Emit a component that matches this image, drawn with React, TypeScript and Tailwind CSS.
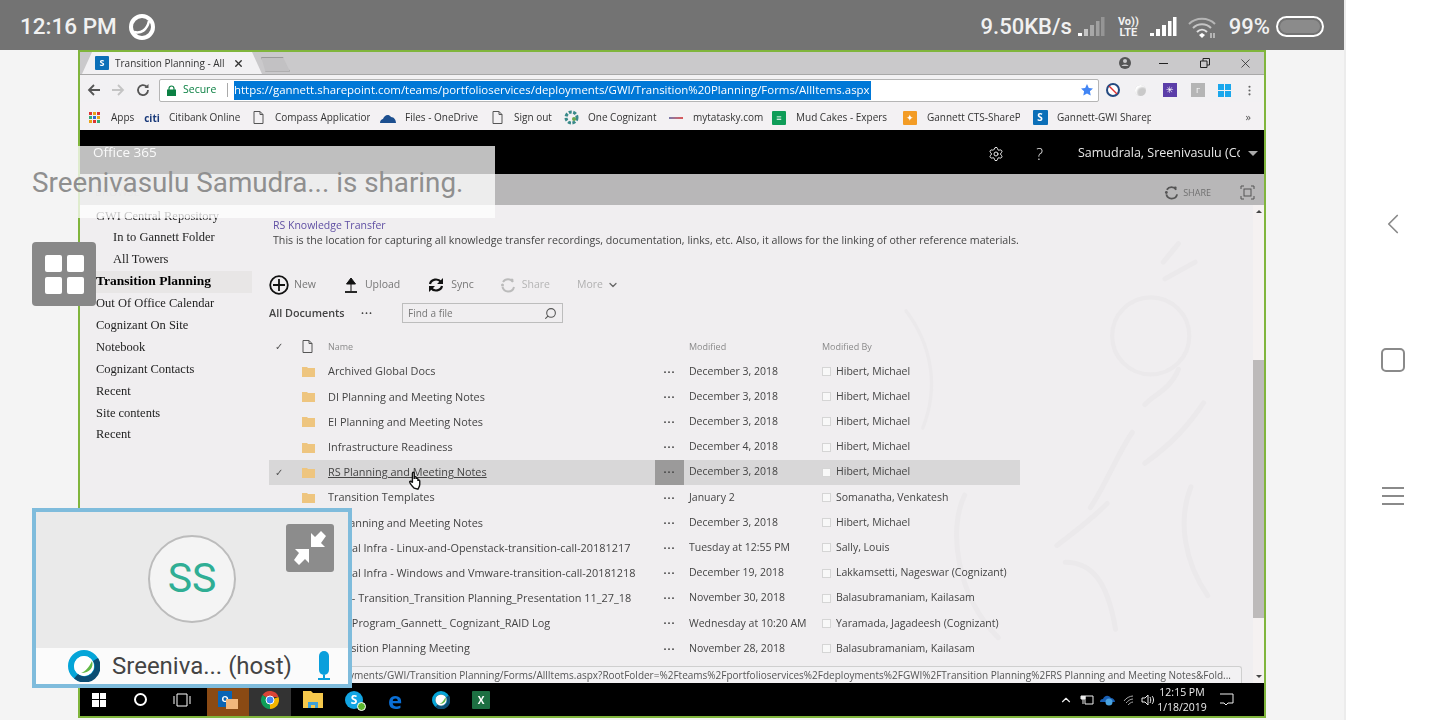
import { ChevronDown, ChevronLeft, ChevronUp, MoreVertical, Search, Settings, X } from "lucide-react";

const rows = [
  { name: "Archived Global Docs", date: "December 3, 2018", by: "Hibert, Michael" },
  { name: "DI Planning and Meeting Notes", date: "December 3, 2018", by: "Hibert, Michael" },
  { name: "EI Planning and Meeting Notes", date: "December 3, 2018", by: "Hibert, Michael" },
  { name: "Infrastructure Readiness", date: "December 4, 2018", by: "Hibert, Michael" },
  { name: "RS Planning and Meeting Notes", date: "December 3, 2018", by: "Hibert, Michael", active: true },
  { name: "Transition Templates", date: "January 2", by: "Somanatha, Venkatesh" },
  { name: "TI Planning and Meeting Notes", date: "December 3, 2018", by: "Hibert, Michael" },
  { name: "Global Infra - Linux-and-Openstack-transition-call-20181217", date: "Tuesday at 12:55 PM", by: "Sally, Louis" },
  { name: "Global Infra - Windows and Vmware-transition-call-20181218", date: "December 19, 2018", by: "Lakkamsetti, Nageswar (Cognizant)" },
  { name: "GWI - Transition_Transition Planning_Presentation 11_27_18", date: "November 30, 2018", by: "Balasubramaniam, Kailasam" },
  { name: "GWI Program_Gannett_ Cognizant_RAID Log", date: "Wednesday at 10:20 AM", by: "Yaramada, Jagadeesh (Cognizant)" },
  { name: "Transition Planning Meeting", date: "November 28, 2018", by: "Balasubramaniam, Kailasam" },
];

const navItems = [
  { label: "GWI Central Repository", indent: false },
  { label: "In to Gannett Folder", indent: true },
  { label: "All Towers", indent: true },
  { label: "Transition Planning", indent: false, active: true },
  { label: "Out Of Office Calendar", indent: false },
  { label: "Cognizant On Site", indent: false },
  { label: "Notebook", indent: false },
  { label: "Cognizant Contacts", indent: false },
  { label: "Recent", indent: false },
  { label: "Site contents", indent: false },
  { label: "Recent", indent: false },
];

function SpLogo({ small }: { small?: boolean }) {
  return (
    <span className={`flex items-center justify-center rounded-[1px] bg-[#0b6fb8] font-bold text-white ${small ? "h-[14px] w-[14px] text-[9px]" : "h-[15px] w-[15px] text-[10px]"}`}>
      S
    </span>
  );
}

function Webex({ size }: { size: number }) {
  return (
    <svg width={size} height={size} viewBox="0 0 32 32" className="shrink-0">
      <circle cx="16" cy="16" r="13" fill="none" stroke="#05a5d8" strokeWidth="6" />
      <path d="M27.5 9.5A13 13 0 0 1 8 26.3" fill="none" stroke="#0b4d73" strokeWidth="6" />
      <circle cx="16" cy="16" r="10" fill="#fff" />
      <path d="M24 11c2 6-2 12-11 12 5-2 8-6 11-12z" fill="#63b946" />
    </svg>
  );
}

function SignalBars({ dim }: { dim?: boolean }) {
  return (
    <svg width="28" height="22" viewBox="0 0 28 22">
      <rect x="1" y="17" width="4" height="3" fill="#fff" />
      <rect x="7" y="13" width="4" height="7" fill={dim ? "#c5c5c5" : "#fff"} />
      <rect x="13" y="9" width="4" height="11" fill={dim ? "#a8a8a8" : "#fff"} />
      <rect x="19" y="5" width="3.5" height="15" fill={dim ? "#a0a0a0" : "#fff"} />
      <rect x="24" y="1" width="3.5" height="19" fill={dim ? "#959595" : "#fff"} />
    </svg>
  );
}

function StatusBar() {
  return (
    <div className="flex h-[50px] w-[1344px] items-center bg-[#737373] pt-[3px] font-['Roboto',sans-serif] font-medium text-[#f1f1f1]">
      <span className="ml-[20px] text-[22.5px]">12:16 PM</span>
      <svg width="28" height="28" viewBox="0 0 28 28" className="ml-[11px]">
        <circle cx="14" cy="14" r="11" fill="none" stroke="#fff" strokeWidth="4" />
        <path d="M6 19c7 2 13-2 15-11" fill="none" stroke="#fff" strokeWidth="2.5" />
      </svg>
      <span className="ml-auto text-[22px]">9.50KB/s</span>
      <span className="ml-[5px]"><SignalBars dim /></span>
      <div className="ml-[13px] flex flex-col items-center text-[11px] font-bold leading-[11px]">
        <span>Vo))</span>
        <span>LTE</span>
      </div>
      <span className="ml-[10px]"><SignalBars /></span>
      <svg width="30" height="24" viewBox="0 0 30 24" className="ml-[10px]">
        <path d="M2 9c7-7 19-7 26 0" fill="none" stroke="#b5b5b5" strokeWidth="2" />
        <path d="M6 13c5-5 13-5 18 0" fill="none" stroke="#c5c5c5" strokeWidth="2" />
        <path d="M10 17c3-3 7-3 10 0" fill="none" stroke="#e0e0e0" strokeWidth="2" />
        <path d="M12 20l3-2 3 2-3 3z" fill="#fff" />
        <path d="M24 18v5M27 18v5" stroke="#d0d0d0" strokeWidth="1.4" />
      </svg>
      <span className="ml-[12px] text-[22px]">99%</span>
      <div className="ml-[6px] mr-[20px] flex h-[21px] w-[48px] items-center rounded-full border-[2px] border-white p-[2px]">
        <div className="h-full w-full rounded-full bg-[#8b8b8b]" />
      </div>
    </div>
  );
}

function TabStrip() {
  return (
    <div className="relative flex h-[23px] items-center border-b border-[#a8a8a8] bg-[#cac9cb]">
      <div className="ml-[2px] flex h-[22px] w-[180px] items-center bg-[#f2f1f3] pl-[13px] [clip-path:polygon(0_100%,10px_0,170px_0,180px_100%)]">
        <SpLogo small />
        <span className="ml-[6px] w-[109px] overflow-hidden whitespace-nowrap text-[10px] text-[#333]">Transition Planning - All I</span>
        <X size={11} strokeWidth={3} className="ml-[9px] text-[#333]" />
      </div>
      <div className="ml-[-1px] mt-[2px] h-[15px] w-[29px] border border-[#9a9a9a] bg-[#c2c1c3] [clip-path:polygon(0_0,75%_0,100%_100%,15%_100%)]" />
      <div className="ml-auto flex items-center text-[#333]">
        <svg width="14" height="14" viewBox="0 0 14 14">
          <circle cx="7" cy="7" r="6" fill="#555" />
          <circle cx="7" cy="5" r="2" fill="#cac9cb" />
          <path d="M3.5 10c1-2 6-2 7 0" fill="#cac9cb" />
        </svg>
        <div className="ml-[27px] h-px w-[9px] bg-[#222]" />
        <svg width="10" height="10" viewBox="0 0 10 10" className="ml-[32px]">
          <path d="M.5 3h6.500v6.500h-6.500zM3 3V.5h6.500v6.500H7" fill="none" stroke="#222" />
        </svg>
        <X size={15} strokeWidth={1.2} className="ml-[28px] mr-[11px] text-[#222]" />
      </div>
    </div>
  );
}

function ToolBar() {
  return (
    <div className="flex h-[27px] items-center bg-[#f2f1f3] pt-[3px]">
      <svg width="14" height="14" viewBox="0 0 14 14" className="ml-[7px]">
        <path d="M13 7H2M7 2 2 7l5 5" fill="none" stroke="#555" strokeWidth="1.800" />
      </svg>
      <svg width="14" height="14" viewBox="0 0 14 14" className="ml-[10px]">
        <path d="M1 7h11M7 2l5 5-5 5" fill="none" stroke="#c4c4c4" strokeWidth="1.800" />
      </svg>
      <svg width="14" height="14" viewBox="0 0 14 14" className="ml-[11px]">
        <path d="M12 7a5 5 0 1 1-1.500-3.500" fill="none" stroke="#555" strokeWidth="1.800" />
        <path d="M12.500 1v4h-4z" fill="#555" />
      </svg>
      <div className="ml-[9px] flex h-[23px] w-[940px] items-center rounded-[2px] border border-[#b5b5b5] bg-white">
        <svg width="9" height="11" viewBox="0 0 9 11" className="ml-[7px]">
          <path d="M2 5V3.500a2.500 2.500 0 0 1 5 0V5" fill="none" stroke="#0b8043" strokeWidth="1.200" />
          <rect y="4.500" width="9" height="6.500" fill="#0b8043" />
        </svg>
        <span className="ml-[7px] w-[36px] text-[10.5px] text-[#0b8043]">Secure</span>
        <div className="ml-[8px] h-[14px] w-px bg-[#aaa]" />
        <span className="ml-[6px] flex h-[19px] items-center bg-[#0078d7] pr-px text-[11.45px] whitespace-nowrap text-white">
          https://gannett.sharepoint.com/teams/portfolioservices/deployments/GWI/Transition%20Planning/Forms/AllItems.aspx
        </span>
        <svg width="14" height="14" viewBox="0 0 14 14" className="ml-auto mr-[4px]">
          <path d="m7 1 1.800 3.900 4.200.5-3.100 2.900.8 4.200L7 10.400l-3.700 2.100.8-4.200L1 5.400l4.200-.5z" fill="#4285f4" />
        </svg>
      </div>
      <svg width="14" height="14" viewBox="0 0 14 14" className="ml-[7px]">
        <circle cx="7" cy="7" r="6" fill="#fff" stroke="#234a80" strokeWidth="2" />
        <path d="M3 3l8 8" stroke="#d33" strokeWidth="1.500" />
      </svg>
      <div className="ml-[15px] h-[11px] w-[11px] rounded-full bg-[#c9c9c9] shadow-[inset_2px_2px_2px_#fff]" />
      <div className="ml-[17px] flex h-[14px] w-[14px] items-center justify-center bg-[#5b3ea8] text-[9px] text-white">✳</div>
      <div className="ml-[14px] flex h-[14px] w-[14px] items-center justify-center bg-[#b5b5b5] text-[8px] text-white">Γ</div>
      <div className="ml-[13px] grid h-[13px] w-[13px] grid-cols-2 gap-px">
        <div className="bg-[#1aa7ec]" />
        <div className="bg-[#1aa7ec]" />
        <div className="bg-[#1aa7ec]" />
        <div className="bg-[#1aa7ec]" />
      </div>
      <MoreVertical size={13} className="ml-[12px] text-[#666]" />
    </div>
  );
}

function Bookmark({ width, icon, label, labelWidth }: { width: string; icon: React.ReactNode; label: string; labelWidth: string }) {
  return (
    <div className={`flex items-center ${width}`}>
      <span className="flex w-[16px] shrink-0 justify-center">{icon}</span>
      <span className={`ml-[9px] overflow-hidden whitespace-nowrap text-[10px] text-[#333] ${labelWidth}`}>{label}</span>
    </div>
  );
}

function DocIcon() {
  return (
    <svg width="11" height="13" viewBox="0 0 11 13">
      <path d="M1 .5h6l3 3v9H1zM7 .5v3h3" fill="none" stroke="#555" />
    </svg>
  );
}

function BookmarksBar() {
  return (
    <div className="flex h-[28px] items-center bg-[#f3f1f3] pl-[6px] pt-[3px]">
      <Bookmark
        width="w-[58px]"
        label="Apps"
        labelWidth="w-[28px]"
        icon={
          <span className="grid h-[11px] w-[11px] grid-cols-3 gap-px">
            {["bg-[#d33]", "bg-[#e8a317]", "bg-[#d33]", "bg-[#3a7]", "bg-[#36c]", "bg-[#e8a317]", "bg-[#e8a317]", "bg-[#d33]", "bg-[#3a7]"].map((c, i) => (
              <span key={i} className={c} />
            ))}
          </span>
        }
      />
      <Bookmark width="w-[106px]" label="Citibank Online" labelWidth="w-[72px]" icon={<span className="text-[10px] font-bold leading-none text-[#1a3a7a]">citi</span>} />
      <Bookmark width="w-[130px]" label="Compass Application" labelWidth="w-[95px]" icon={<DocIcon />} />
      <Bookmark
        width="w-[109px]"
        label="Files - OneDrive"
        labelWidth="w-[74px]"
        icon={
          <svg width="16" height="10" viewBox="0 0 16 10">
            <path d="M0 10c0-3 2-4 3-4 1-3 5-6 8-2 3 0 5 3 5 6z" fill="#1c4f8f" />
          </svg>
        }
      />
      <Bookmark width="w-[74px]" label="Sign out" labelWidth="w-[40px]" icon={<DocIcon />} />
      <Bookmark
        width="w-[105px]"
        label="One Cognizant"
        labelWidth="w-[70px]"
        icon={
          <svg width="15" height="15" viewBox="0 0 15 15">
            <circle cx="7.500" cy="7.500" r="5.500" fill="none" stroke="#3a8a8a" strokeWidth="3" strokeDasharray="3 1.500" />
            <circle cx="10" cy="9" r="2" fill="#6aa84f" />
          </svg>
        }
      />
      <Bookmark width="w-[103px]" label="mytatasky.com" labelWidth="w-[72px]" icon={<span className="h-[2px] w-[14px] bg-gradient-to-r from-[#77a] to-[#d55]" />} />
      <Bookmark
        width="w-[131px]"
        label="Mud Cakes - Expers"
        labelWidth="w-[93px]"
        icon={
          <span className="flex h-[14px] w-[14px] items-center justify-center rounded-[1px] bg-[#0f9d58] text-[9px] leading-none text-white">≡</span>
        }
      />
      <Bookmark
        width="w-[130px]"
        label="Gannett CTS-ShareP"
        labelWidth="w-[93px]"
        icon={<span className="flex h-[14px] w-[14px] items-center justify-center rounded-[1px] bg-[#f39c25] text-[9px] leading-none text-white">✦</span>}
      />
      <Bookmark width="w-[129px]" label="Gannett-GWI Sharep" labelWidth="w-[94px]" icon={<SpLogo />} />
      <span className="ml-auto mr-[13px] text-[11px] text-[#555]">»</span>
    </div>
  );
}

function TopBar() {
  return (
    <div className="flex h-[44px] items-center bg-black pt-[3px] text-[#e8e8e8]">
      <span className="ml-[13px] -translate-y-[1px] text-[13.500px]">Office 365</span>
      <Settings size={16} strokeWidth={1.500} className="ml-auto" />
      <span className="ml-[32px] text-[16px] font-light">?</span>
      <span className="ml-[35px] w-[162px] overflow-hidden whitespace-nowrap text-[12.500px]">Samudrala, Sreenivasulu (Cognizant)</span>
      <div className="ml-[8px] mr-[6px] h-0 w-0 border-x-[5px] border-t-[5px] border-x-transparent border-t-[#aaa]" />
    </div>
  );
}

function ShareStrip() {
  return (
    <div className="flex h-[31px] items-center bg-[#b8b7b8] pt-[6px]">
      <span className="ml-[15px] text-[11px] text-[#aaa]">BROWSE</span>
      <svg width="15" height="15" viewBox="0 0 16 16" className="ml-auto">
        <path d="M3 5a6 6 0 0 1 10 0M14 10a6 6 0 0 1-6 4.500A6 6 0 0 1 2.500 10" fill="none" stroke="#555" strokeWidth="2" />
        <circle cx="2.500" cy="8" r="1.500" fill="#555" />
        <circle cx="12" cy="3" r="1.500" fill="#555" />
      </svg>
      <span className="ml-[4px] text-[9px] text-[#707070]">SHARE</span>
      <svg width="15" height="15" viewBox="0 0 15 15" className="ml-[29px] mr-[9px]">
        <path d="M1 4V1h3M11 1h3v3M14 11v3h-3M4 14H1v-3" fill="none" stroke="#555" />
        <rect x="4" y="4" width="7" height="7" fill="none" stroke="#555" />
      </svg>
    </div>
  );
}

function Sidebar() {
  return (
    <div className="w-[189px] shrink-0 font-['Liberation_Serif',serif] text-[12.500px] text-[#222]">
      {navItems.map((item, i) => (
        <div
          key={i}
          className={`flex h-[21.900px] items-center ${item.active ? "mr-[17px] bg-[#e8e6e6] text-[13.500px] font-bold text-black" : ""} ${item.indent ? "pl-[33px]" : "pl-[16px]"}`}
        >
          {item.label}
        </div>
      ))}
    </div>
  );
}

function CommandBar() {
  return (
    <div className="mt-[25px] flex h-[24px] items-center text-[10.500px] text-[#777]">
      <svg width="20" height="20" viewBox="0 0 20 20">
        <circle cx="10" cy="10" r="8.800" fill="none" stroke="#111" strokeWidth="1.800" />
        <path d="M10 4v12M4 10h12" stroke="#111" strokeWidth="1.800" />
      </svg>
      <span className="ml-[5px]">New</span>
      <svg width="14" height="16" viewBox="0 0 14 16" className="ml-[28px]">
        <path d="M7 14V3M2.500 7 7 1l4.500 6z" fill="#111" stroke="#111" />
        <path d="M1 15h12" stroke="#111" strokeWidth="1.800" />
      </svg>
      <span className="ml-[7px]">Upload</span>
      <svg width="16" height="16" viewBox="0 0 16 16" className="ml-[28px]">
        <path d="M2 7c1-5 8-6 11-2M14 9c-1 5-8 6-11 2" fill="none" stroke="#111" strokeWidth="2.200" />
        <path d="M15 1v6H9zM1 15V9h6z" fill="#111" />
      </svg>
      <span className="ml-[7px]">Sync</span>
      <svg width="16" height="16" viewBox="0 0 16 16" className="ml-[26px]">
        <path d="M3 5a6 6 0 0 1 10 0M14 10a6 6 0 0 1-6 4.500A6 6 0 0 1 2.500 10" fill="none" stroke="#bbb" strokeWidth="2" />
        <circle cx="2.500" cy="8" r="1.500" fill="#bbb" />
        <circle cx="12" cy="3" r="1.500" fill="#bbb" />
      </svg>
      <span className="ml-[6px] text-[#b5b5b5]">Share</span>
      <span className="ml-[27px] text-[#b0b0b0]">More</span>
      <ChevronDown size={12} strokeWidth={2.500} className="ml-[4px] text-[#666]" />
    </div>
  );
}

function ViewBar() {
  return (
    <div className="mt-[6px] flex h-[20px] items-center">
      <span className="w-[75px] whitespace-nowrap text-[10.800px] font-semibold text-[#444]">All Documents</span>
      <span className="ml-[17px] w-[14px] text-[8px] leading-none tracking-[1px] text-[#444]">•••</span>
      <div className="ml-[27px] flex h-[20px] w-[161px] items-center border border-[#bdbdbd] pl-[5px] pr-[5px] text-[10px] text-[#777]">
        Find a file
        <Search size={13} className="ml-auto -scale-x-100 text-[#555]" />
      </div>
    </div>
  );
}

function FileGrid() {
  return (
    <div className="mt-[11px] w-[751px] text-[10.500px] text-[#444]">
      <div className="grid h-[25px] grid-cols-[33px_26px_327px_29px_138px_1fr] items-center text-[9px] text-[#8a8a8a]">
        <span className="pl-[6px] text-[10px] text-[#555]">✓</span>
        <svg width="11" height="13" viewBox="0 0 11 13">
          <path d="M1 .5h6l3 3v9H1zM7 .5v3h3" fill="none" stroke="#555" />
        </svg>
        <span>Name</span>
        <span />
        <span className="pl-[5px]">Modified</span>
        <span>Modified By</span>
      </div>
      {rows.map((row) => (
        <div
          key={row.name}
          className={`grid h-[25.200px] grid-cols-[33px_26px_327px_29px_138px_1fr] items-center whitespace-nowrap ${row.active ? "bg-[#d8d7d8]" : ""}`}
        >
          <span className="pl-[6px] text-[10px] text-[#555]">{row.active ? "✓" : ""}</span>
          <svg width="13" height="11" viewBox="0 0 13 11">
            <path d="M0 1h5l1 1h7v9H0z" fill="#eec57f" />
          </svg>
          <span className={`text-[10.900px] ${row.active ? "underline" : ""}`}>{row.name}</span>
          <span className={`flex h-full items-center justify-center text-[8px] tracking-[1px] text-[#444] ${row.active ? "bg-[#9b9a9a]" : ""}`}>•••</span>
          <span className="pl-[5px]">{row.date}</span>
          <span className="flex items-center gap-[5px]">
            <span className="h-[9px] w-[9px] border border-[#d5d5d5] bg-[#f8f8f8]" />
            {row.by}
          </span>
        </div>
      ))}
    </div>
  );
}

function Watermark() {
  return (
    <svg className="absolute inset-0 h-full w-full" viewBox="0 0 1174 478" fill="none" stroke="#ebe9eb" strokeWidth="6" strokeLinecap="round">
      <circle cx="1052" cy="110" r="46" strokeWidth="5" />
      <path d="M1085 0l-18 22M1105 22l-36 20M1085 150c-10 25-30 30-40 42M1115 190c-20 30-40 50-70 72M1030 225c-20 30-30 60-50 90M1000 310c-20 20-40 35-60 50" />
      <path d="M830 300c-20 40-10 120 40 170M1100 290c-16 40-8 90 20 130M950 380c30 0 50 20 60 80" />
      <path d="M760 80c30 40 40 90 20 140" strokeWidth="4" />
    </svg>
  );
}

function MainContent() {
  return (
    <div className="relative flex-1 overflow-hidden">
      <Watermark />
      <div className="relative pt-[13px] font-['Open_Sans',sans-serif]">
        <div className="pl-[4px] text-[10.500px] leading-[15px] text-[#5f4fa3]">RS Knowledge Transfer</div>
        <div className="pl-[4px] text-[10.650px] leading-[15px] text-[#444]">
          This is the location for capturing all knowledge transfer recordings, documentation, links, etc. Also, it allows for the linking of other reference materials.
        </div>
        <CommandBar />
        <ViewBar />
        <FileGrid />
      </div>
      <div className="absolute bottom-0 right-[11px] flex h-[17px] w-[1163px] items-center justify-end overflow-hidden rounded-tr-[3px] border border-b-0 border-[#cfcfcf] bg-[#f2f1f3] pr-[10px] font-['Open_Sans',sans-serif] text-[10px] whitespace-nowrap text-[#555]">
        deployments/GWI/Transition Planning/Forms/AllItems.aspx?RootFolder=%2Fteams%2Fportfolioservices%2Fdeployments%2FGWI%2FTransition Planning%2FRS Planning and Meeting Notes&amp;Fold...
      </div>
      <svg width="22" height="22" viewBox="0 0 24 24" className="absolute left-[137px] top-[264px]">
        <path d="M9 21c-2-2-5-5-5-7 0-1 2-1 3 1V5c0-2 2-2 2 0v6-2c0-1 2-1 2 0v2c0-1 2-1 2 0v2c0-1 2-1 2 0v4c0 2-1 3-2 5z" fill="#fff" stroke="#111" strokeWidth="1.500" />
      </svg>
    </div>
  );
}

function ScrollBar() {
  return (
    <div className="flex w-[11px] shrink-0 flex-col items-center bg-[#f5f1f1]">
      <div className="mt-[5px] h-0 w-0 border-x-[3px] border-b-[3px] border-x-transparent border-b-[#444]" />
      <div className="mt-[147px] h-[258px] w-full bg-[#bdbaba]" />
      <div className="mt-auto mb-[5px] h-0 w-0 border-x-[3px] border-t-[3px] border-x-transparent border-t-[#444]" />
    </div>
  );
}

function TaskBar() {
  return (
    <div className="flex h-[33px] items-center bg-black pr-[2px] text-[#eee]">
      <div className="ml-[12px] grid h-[14px] w-[14px] grid-cols-2 gap-[1px]">
        <div className="bg-white" />
        <div className="bg-white" />
        <div className="bg-white" />
        <div className="bg-white" />
      </div>
      <div className="ml-[28px] h-[13px] w-[13px] rounded-full border-[2px] border-white" />
      <svg width="18" height="14" viewBox="0 0 18 14" className="ml-[26px]">
        <path d="M4 1h10v12H4zM1 3v8M17 3v8" fill="none" stroke="#fff" />
      </svg>
      <div className="ml-[16px] flex h-full w-[42px] items-center justify-center bg-[#8a4a14]">
        <div className="relative h-[18px] w-[20px]">
          <div className="flex h-[16px] w-[14px] items-center justify-center bg-[#0a64b4] text-[9px] font-bold leading-none text-white">O</div>
          <div className="absolute bottom-0 right-0 h-[10px] w-[12px] bg-[#f2b77c]" />
        </div>
      </div>
      <div className="flex h-full w-[42px] items-center justify-center bg-[#333]">
        <svg width="20" height="20" viewBox="0 0 20 20">
          <path d="M10 10 2.500 5A9 9 0 0 1 18.500 7H10z" fill="#db4437" />
          <path d="M10 10 18.500 7A9 9 0 0 1 10 19z" fill="#f4b400" />
          <path d="M10 10 10 19A9 9 0 0 1 2.500 5z" fill="#0f9d58" />
          <circle cx="10" cy="10" r="4" fill="#4285f4" stroke="#fff" />
        </svg>
      </div>
      <svg width="20" height="17" viewBox="0 0 20 17" className="ml-[12px]">
        <path d="M0 0h8l2 2h10v15H0z" fill="#f5c84c" />
        <path d="M5 17v-6h10v6h-3v-3H8v3z" fill="#3fa0d8" />
      </svg>
      <div className="relative ml-[22px] flex h-[18px] w-[18px] items-center justify-center rounded-full bg-[#12a5e3] text-[12px] font-bold leading-none text-white">
        S
        <div className="absolute -bottom-[2px] -right-[3px] h-[9px] w-[9px] rounded-full border border-white bg-[#5cb82e]" />
      </div>
      <span className="ml-[25px] text-[24px] font-bold leading-none text-[#0a6fd6]">e</span>
      <span className="ml-[30px]"><Webex size={18} /></span>
      <div className="ml-[22px] flex h-[18px] w-[18px] items-center justify-center rounded-[1px] bg-[#1d6f42] text-[10px] font-bold leading-none text-white">X</div>
      <ChevronUp size={14} className="ml-auto" />
      <svg width="14" height="10" viewBox="0 0 14 10" className="ml-[7px]">
        <path d="M5 1h8v8H5z" fill="none" stroke="#eee" />
        <path d="M1 1h4v3H1zM3 4v5" fill="#eee" stroke="#eee" />
      </svg>
      <svg width="15" height="12" viewBox="0 0 15 12" className="ml-[6px]">
        <path d="M0 8c0-2 1-3 3-3 1-3 5-5 8-1 2 0 4 2 4 4z" fill="#1a5fb4" />
        <circle cx="9" cy="8" r="3.500" fill="#4aa3e0" />
      </svg>
      <svg width="12" height="12" viewBox="0 0 12 12" className="ml-[8px]">
        <path d="M1 7c2-3 6-5 9-5M3 9c2-2 4-4 7-4M5 11c1-1 3-3 5-3" fill="none" stroke="#aaa" />
      </svg>
      <svg width="14" height="12" viewBox="0 0 14 12" className="ml-[6px]">
        <path d="M1 4h3l3-3v10L4 8H1z" fill="none" stroke="#eee" />
        <path d="M9 3c1 2 1 4 0 6M11 2c2 2 2 6 0 8" fill="none" stroke="#eee" />
      </svg>
      <div className="ml-[3px] flex w-[48px] flex-col items-center text-[10.500px] leading-[15px]">
        <span>12:15 PM</span>
        <span>1/18/2019</span>
      </div>
      <svg width="15" height="13" viewBox="0 0 15 13" className="ml-[13px] mr-[28px]">
        <path d="M1 1h13v9H9l-2 2-2-2H1" fill="none" stroke="#eee" />
      </svg>
    </div>
  );
}

function SharedWindow() {
  return (
    <div className="ml-[78px] flex h-[668px] w-[1188px] flex-col overflow-hidden border-[2px] border-[#80b53c] bg-[#f0eef0] font-['Open_Sans',sans-serif] blur-[0.3px]">
      <TabStrip />
      <ToolBar />
      <BookmarksBar />
      <TopBar />
      <ShareStrip />
      <div className="flex h-[478px]">
        <Sidebar />
        <MainContent />
        <ScrollBar />
      </div>
      <TaskBar />
    </div>
  );
}

function VideoTile() {
  return (
    <div className="absolute left-[32px] top-[508px] flex h-[180px] w-[320px] flex-col border-[4px] border-[#7fbcdc] bg-[#eaeaea] font-['Roboto',sans-serif]">
      <div className="relative flex flex-1 items-center justify-center">
        <div className="-translate-y-[1px] flex h-[88px] w-[88px] items-center justify-center rounded-full border-[2px] border-[#bcbcbc] bg-[#f4f4f4] text-[41px] text-[#2fae94]">SS</div>
        <div className="absolute right-[14px] top-[12px] flex h-[48px] w-[48px] items-center justify-center rounded-[3px] bg-[#8c8c8c]">
          <svg width="34" height="34" viewBox="0 0 34 34" fill="#fff">
            <path d="M33 5 28 0 22 6l-4-4v14h14l-4-4zM1 29l5 5 6-6 4 4V18H2l4 4z" />
          </svg>
        </div>
      </div>
      <div className="flex h-[36px] items-center bg-[#fbfbfb] pl-[32px]">
        <Webex size={32} />
        <span className="ml-[12px] text-[24px] text-[#444]">Sreeniva... (host)</span>
        <svg width="16" height="30" viewBox="0 0 16 30" className="ml-[24px]">
          <rect x="3" y="0" width="10" height="24" rx="5" fill="#0a9fdc" />
          <path d="M8 24v3M2 28h12" stroke="#0a9fdc" strokeWidth="2" />
        </svg>
      </div>
    </div>
  );
}

function NavBar() {
  return (
    <div className="flex w-[96px] flex-col items-center border-l-[2px] border-[#ececec] bg-white text-[#8a8a8a]">
      <ChevronLeft size={34} strokeWidth={1.200} className="mt-[207px]" />
      <div className="mt-[107px] h-[24px] w-[24px] rounded-[5px] border-[2px] border-[#8a8a8a]" />
      <div className="mt-[115px] flex w-[22px] flex-col gap-[6px]">
        <div className="h-[2px] bg-[#8a8a8a]" />
        <div className="h-[2px] bg-[#8a8a8a]" />
        <div className="h-[2px] bg-[#8a8a8a]" />
      </div>
    </div>
  );
}

export default function App() {
  return (
    <div className="relative flex h-[720px] w-[1440px] overflow-hidden bg-[#f4f4f4]">
      <div className="w-[1344px]">
        <StatusBar />
        <SharedWindow />
      </div>
      <NavBar />

      {/* Meeting overlays sitting on top of the shared screen */}
      <div className="absolute left-[78px] top-[146px] h-[72px] w-[417px] bg-white/75" />
      <div className="absolute left-[32px] top-[165px] font-['Roboto',sans-serif] text-[27.800px] leading-[36px] text-[#8f8f8f]">
        Sreenivasulu Samudra... is sharing.
      </div>
      <div className="absolute left-[32px] top-[242px] grid h-[64px] w-[64px] grid-cols-[17px_17px] content-center justify-center gap-[5px] rounded-[4px] bg-[#888]">
        <div className="h-[17px] rounded-[2px] bg-white" />
        <div className="h-[17px] rounded-[2px] bg-white" />
        <div className="h-[17px] rounded-[2px] bg-white" />
        <div className="h-[17px] rounded-[2px] bg-white" />
      </div>
      <VideoTile />
    </div>
  );
}
